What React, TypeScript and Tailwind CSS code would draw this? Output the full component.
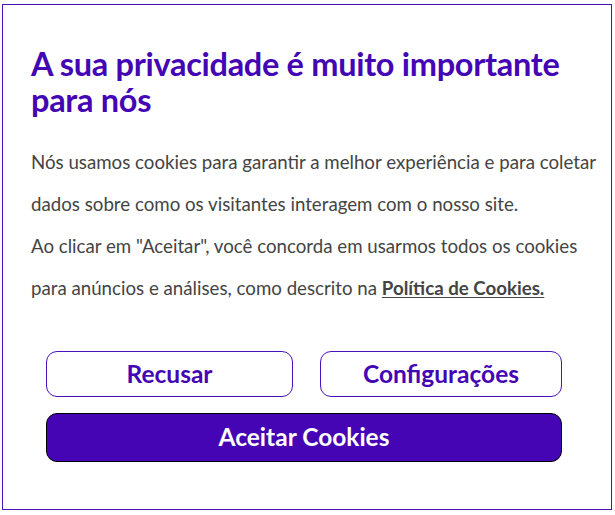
import React from "react";

const PURPLE = "text-[#4406b4]";

export default function App() {
  return (
    <div className="w-[615px] h-[515px] bg-white pt-[4px] pl-[2px]" style={{ fontFamily: "Lato, 'Open Sans', sans-serif" }}>
      <div className="w-[610px] h-[506px] border border-[#4a12b8] bg-white px-[28px] pt-[41px]">
        <h1 className={`text-[32.5px] leading-[36px] font-bold ${PURPLE} tracking-[-0.3px]`}>
          A sua privacidade é muito importante para nós
        </h1>
        <div className="mt-[23px] text-[18.7px] leading-[42px] text-[#444444] whitespace-nowrap">
          <p>
            Nós usamos cookies para garantir a melhor experiência e para coletar
            <br />
            dados sobre como os visitantes interagem com o nosso site.
          </p>
          <p>
            Ao clicar em "Aceitar", você concorda em usarmos todos os cookies
            <br />
            para anúncios e análises, como descrito na{" "}
            <a href="#" className="font-bold underline underline-offset-2">Política de Cookies.</a>
          </p>
        </div>
        <div className="mt-[42px] pl-[15px] pr-[21px] flex flex-col gap-[16px]">
          <div className="flex gap-[27px]">
            <button type="button" className={`w-[247px] h-[46px] rounded-[11px] border border-[#4a12b8] bg-white text-[24.5px] font-bold ${PURPLE}`}>
              Recusar
            </button>
            <button type="button" className={`flex-1 h-[46px] rounded-[11px] border border-[#4a12b8] bg-white text-[24.5px] font-bold ${PURPLE}`}>
              Configurações
            </button>
          </div>
          <button type="button" className="w-full h-[49px] rounded-[11px] border border-black bg-[#4505b4] text-[24.5px] font-bold text-white">
            Aceitar Cookies
          </button>
        </div>
      </div>
    </div>
  );
}
